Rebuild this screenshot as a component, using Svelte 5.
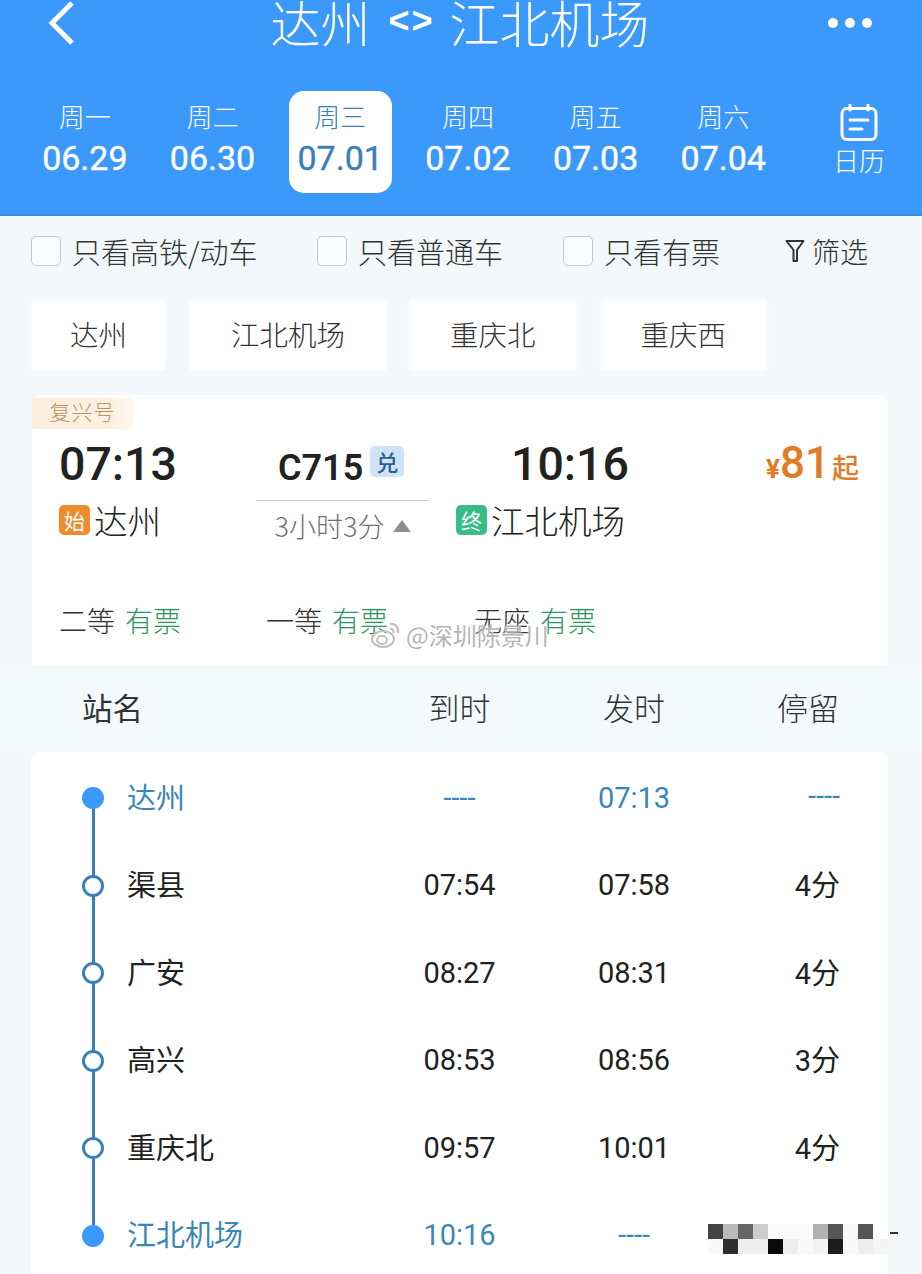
<script>
  const days = [
    { w: '周一', d: '06.29' },
    { w: '周二', d: '06.30' },
    { w: '周三', d: '07.01', active: true },
    { w: '周四', d: '07.02' },
    { w: '周五', d: '07.03' },
    { w: '周六', d: '07.04' }
  ];
  const filters = [
    { t: '只看高铁/动车', w: 286 },
    { t: '只看普通车', w: 246 },
    { t: '只看有票', w: 222 }
  ];
  const chips = ['达州', '江北机场', '重庆北', '重庆西'];
  const seats = [
    { n: '二等', w: 207 },
    { n: '一等', w: 208 },
    { n: '无座', w: 200 }
  ];
  const stops = [
    { n: '达州', a: '----', d: '07:13', s: '----', hl: true, solid: true },
    { n: '渠县', a: '07:54', d: '07:58', s: '4分' },
    { n: '广安', a: '08:27', d: '08:31', s: '4分' },
    { n: '高兴', a: '08:53', d: '08:56', s: '3分' },
    { n: '重庆北', a: '09:57', d: '10:01', s: '4分' },
    { n: '江北机场', a: '10:16', d: '----', s: '', hl: true, solid: true, last: true }
  ];
  const mosaic = [
    '#444','#bbb','#666','#ccc','#fafafa','#fafafa','#fafafa','#b0b0b0','#555','#f8f8f8','#555','#fff',
    '#f8f8f8','#2e2e2e','#eee','#eee','#0a0a0a','#eee','#f8f8f8','#f2f2f2','#1c1c1c','#f8f8f8','#eee','#f5f5f5'
  ];
</script>

<div class="page">
  <header class="head">
    <div class="nav">
      <svg class="back" viewBox="0 0 32 46" width="32" height="46"><path d="M26 3 L6 23 L26 43" fill="none" stroke="#fff" stroke-width="5"/></svg>
      <h1>达州<span>&lt;&gt;</span>江北机场</h1>
      <div class="more"><i></i><i></i><i></i></div>
    </div>
    <div class="tabs">
      {#each days as x}
        <div class="tab" class:active={x.active}>
          <span class="wk">{x.w}</span>
          <span class="dt">{x.d}</span>
        </div>
      {/each}
      <div class="cal">
        <svg viewBox="0 0 38 38" width="38" height="38" fill="none" stroke="#fff" stroke-width="3">
          <rect x="2" y="4.500" width="34" height="31" rx="5"/>
          <path d="M10 1v5M28 1v5M10 16h18M10 25h12" stroke-linecap="round"/>
        </svg>
        <span>日历</span>
      </div>
    </div>
  </header>

  <section class="filters">
    {#each filters as f}
      <div class="check" style:width="{f.w}px"><span class="box"></span><span>{f.t}</span></div>
    {/each}
    <div class="filter-btn">
      <svg viewBox="0 0 20 24" width="20" height="24" fill="none" stroke="#333" stroke-width="2"><path d="M1.500 2h17L12 11v11H8.500V11z" stroke-linejoin="round"/></svg>
      <span>筛选</span>
    </div>
  </section>

  <section class="chips">
    {#each chips as c}
      <div class="chip">{c}</div>
    {/each}
  </section>

  <section class="card">
    <div class="brand">复兴号</div>
    <div class="main">
      <div class="side from">
        <div class="time">07:13</div>
        <div class="st"><span class="tag orange">始</span>达州</div>
      </div>
      <div class="mid">
        <div class="code">C715<span class="dui">兑</span></div>
        <div class="dur">3小时3分<i class="tri"></i></div>
      </div>
      <div class="side to">
        <div class="time">10:16</div>
        <div class="st"><span class="tag green">终</span>江北机场</div>
      </div>
      <div class="price"><small>¥</small>81<em>起</em></div>
    </div>
    <div class="seats">
      {#each seats as s}
        <div class="seat" style:width="{s.w}px">{s.n}<b>有票</b></div>
      {/each}
    </div>
    <div class="mark">
      <svg viewBox="0 0 32 28" width="32" height="28" fill="none" stroke="#bdbdbd" stroke-width="2"><ellipse cx="13" cy="18" rx="11" ry="8"/><ellipse cx="12" cy="19" rx="5" ry="4"/><path d="M20 3c5-1 9 3 8 9M20 8c2-.5 4 1 3.500 4"/></svg>
      <span>@深圳陈景川</span>
    </div>
  </section>

  <section class="thead">
    <span class="c-name">站名</span>
    <span class="c">到时</span>
    <span class="c">发时</span>
    <span class="c">停留</span>
  </section>

  <section class="list">
    {#each stops as r}
      <div class="row" class:hl={r.hl} class:last={r.last}>
        <span class="dot" class:solid={r.solid}></span>
        <span class="name">{r.n}</span>
        <span class="c">{r.a}</span>
        <span class="c">{r.d}</span>
        <span class="c stay">{r.s}</span>
      </div>
    {/each}
    <div class="mosaic">
      {#each mosaic as m}<i style:background={m}></i>{/each}
    </div>
    <div class="smudge"></div>
  </section>
</div>

<style>
  :global(body) { margin: 0; background: #f3f7fa; }
  .page {
    width: 922px; height: 1274px; overflow: hidden; position: relative;
    font-family: "Noto Sans CJK SC", "Noto Sans", sans-serif; color: #2a2a2a; background: #f4f8fa;
  }
  .head { height: 216px; background: #3b99fb; color: #fff; box-sizing: border-box; border-bottom: 2px solid #3a8bdc; }
  .nav { height: 46px; padding: 0 50px 0 46px; display: flex; align-items: center; justify-content: space-between; }
  .back { flex: none; }
  h1 { margin: -5px 0 0 14px; font-size: 50px; font-weight: 300; line-height: 46px; white-space: nowrap; display: flex; align-items: center; }
  h1 span { font-family: "Liberation Sans", sans-serif; font-size: 36px; font-weight: 700; margin: 0 15px 0 18px; letter-spacing: 2px; }
  .more { display: flex; gap: 7px; }
  .more i { width: 10px; height: 10px; border-radius: 50%; background: #fff; }
  .tabs { display: flex; align-items: flex-start; padding: 45px 0 0 21px; }
  .tab { width: 127.7px; height: 102px; display: flex; flex-direction: column; align-items: center; box-sizing: border-box; padding-top: 7px; }
  .tab.active { width: 103px; margin: 0 12.350px; background: #fff; border-radius: 15px; color: #3a7fb8; }
  .wk { font-size: 26px; line-height: 36px; font-weight: 300; }
  .dt { font-family: Roboto, sans-serif; font-size: 34px; line-height: 48px; font-weight: 400; white-space: nowrap; -webkit-text-stroke: .4px currentColor; }
  .cal { margin-left: 42px; margin-top: 13px; display: flex; flex-direction: column; align-items: center; width: 60px; }
  .cal svg { display: block; }
  .cal span { font-size: 26px; line-height: 36px; font-weight: 300; }

  .filters { display: flex; align-items: center; height: 32px; padding: 19px 0 2px 31px; font-size: 29px; font-weight: 300; color: #333; }
  .check { display: flex; align-items: center; gap: 11px; white-space: nowrap; }
  .box { width: 30px; height: 30px; box-sizing: border-box; border: 1px solid #c6c9cc; border-radius: 5px; background: #fbfcfd; flex: none; }
  .filter-btn { display: flex; align-items: center; gap: 7px; font-size: 28px; }

  .chips { display: flex; gap: 25px; padding: 31px 0 0 32px; }
  .chip { height: 70px; padding: 0 38px 4px; box-sizing: border-box; background: #fff; display: flex; align-items: center; font-size: 28.500px; font-weight: 300; color: #333; box-shadow: 0 0 6px rgba(255,255,255,.9); }
  .chip:nth-child(2) { padding: 0 41px 4px; }
  .chip:nth-child(3) { padding: 0 40px 4px; margin-left: -1px; }
  .chip:nth-child(4) { padding: 0 40px 4px; }

  .card { position: relative; margin: 25px 34px 0 32px; height: 270px; background: #fff; border-radius: 10px 10px 0 0; box-sizing: border-box; }
  .brand { position: absolute; left: 0; top: 3px; width: 101px; height: 31px; background: linear-gradient(90deg, #fdeedd, #fdf0e0 80%, #fff7ef); color: #b8935f; font-size: 21px; line-height: 26px; font-weight: 300; text-align: center; border-radius: 2px; letter-spacing: 1px; }
  .main { display: flex; height: 148px; padding: 39px 0 0 27px; box-sizing: border-box; }
  .side { width: 198px; }
  .to { margin-left: 27px; width: 310px; }
  .time { font-family: Roboto, sans-serif; font-size: 46.500px; line-height: 58px; font-weight: 500; color: #222; margin-top: 1px; margin-bottom: -1px; }
  .to .time { margin-left: 55px; }
  .st { display: flex; align-items: center; gap: 4px; font-size: 33.500px; font-weight: 300; line-height: 44px; margin-top: 6px; color: #222; white-space: nowrap; }
  .tag { width: 31px; height: 30px; border-radius: 5px; font-size: 21px; line-height: 30px; text-align: center; color: #fff; flex: none; font-weight: 400; }
  .orange { background: #ee8c2c; }
  .green { background: #38bc8a; }
  .mid { width: 172px; }
  .code { height: 67px; box-sizing: border-box; padding: 10px 0 0 21px; display: flex; align-items: flex-start; gap: 7px; font-family: Roboto, sans-serif; font-weight: 600; font-size: 36px; line-height: 48px; color: #222; border-bottom: 1px solid #c9c9c9; }
  .dui { width: 34px; height: 31px; margin-top: 2px; background: #cfe3f8; border-radius: 5px; font-size: 22px; line-height: 31px; text-align: center; font-family: "Noto Sans CJK SC", sans-serif; font-weight: 500; color: #2f5f8e; }
  .dur { display: flex; align-items: center; justify-content: center; gap: 9px; font-size: 27px; line-height: 50px; color: #707070; font-weight: 300; }
  .tri { width: 0; height: 0; border-left: 9px solid transparent; border-right: 9px solid transparent; border-bottom: 12px solid #8e8e8e; }
  .price { display: flex; align-items: baseline; height: 58px; color: #e27a26; font-family: Roboto, sans-serif; font-weight: 500; font-size: 44px; line-height: 58px; white-space: nowrap; }
  .price small { font-size: 26px; font-weight: 700; }
  .price em { font-style: normal; font-size: 27px; font-family: "Noto Sans CJK SC", sans-serif; font-weight: 500; margin-left: 2px; }
  .seats { display: flex; padding: 57px 0 0 27px; font-size: 28px; line-height: 40px; font-weight: 300; color: #333; }
  .seat { white-space: nowrap; }
  .seat b { font-weight: 300; color: #2e9462; margin-left: 10px; }
  .mark { position: absolute; left: 338px; top: 225px; display: flex; align-items: center; gap: 4px; color: #b5b5b5; font-size: 24px; line-height: 30px; white-space: nowrap; text-shadow: 0 0 3px rgba(255,255,255,.9); }

  .thead { display: grid; grid-template-columns: 290px 175px 174px 174px; height: 87px; align-items: center; padding: 0 0 4px 82px; box-sizing: border-box; background: #f4f9fc; font-size: 31px; font-weight: 300; color: #333; }
  .thead .c { text-align: center; }
  .thead .c-name { font-weight: 400; font-size: 30.500px; }

  .list { position: relative; margin: 0 34px 0 31px; background: #fff; padding-top: 2px; height: 530px; box-sizing: border-box; border-radius: 8px 8px 0 0; }
  .row { position: relative; display: grid; grid-template-columns: 96px 245px 175px 174px 119px; height: 87.500px; align-items: center; font-size: 29px; color: #222; font-weight: 300; }
  .row .name { grid-column: 2; font-weight: 400; margin-top: -4px; }
  .row .c { text-align: center; font-family: Roboto, sans-serif; font-size: 29px; font-weight: 400; white-space: nowrap; }
  .row .stay { font-family: Roboto, "Noto Sans CJK SC", sans-serif; margin-top: -4px; text-align: right; }
  .row.hl, .row.hl .c { color: #3a87b8; }
  .dot { position: absolute; left: 51px; top: 33px; width: 22px; height: 22px; box-sizing: border-box; border: 3px solid #3a80b8; background: #fff; border-radius: 50%; z-index: 1; }
  .dot.solid { background: #3b99fb; border-color: #3b99fb; }
  .row::after { content: ""; position: absolute; left: 60.500px; top: 44px; width: 3px; height: 88px; background: #3a80b8; }
  .row.last::after { display: none; }
  .mosaic { position: absolute; left: 677px; top: 472px; display: grid; grid-template-columns: repeat(12, 15px); grid-auto-rows: 15px; }
  .mosaic i { display: block; }
  .smudge { position: absolute; left: 859px; top: 480px; width: 8px; height: 2px; background: #333; }
</style>
